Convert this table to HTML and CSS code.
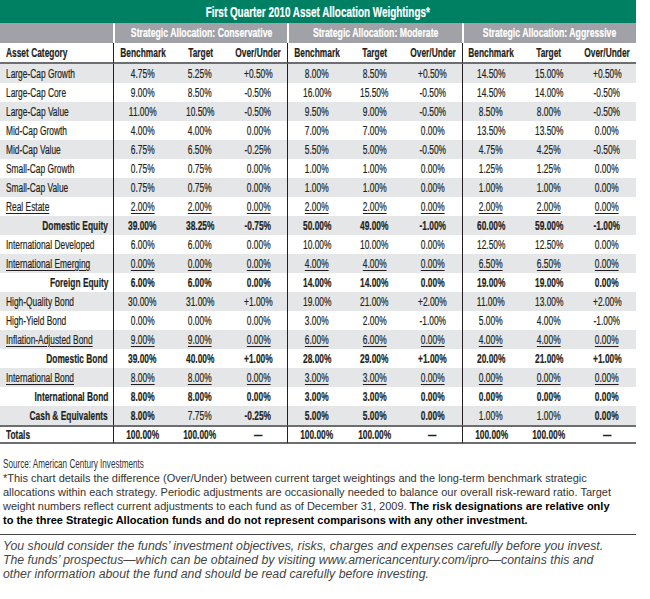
FILE: index.html
```html
<!DOCTYPE html>
<html lang="en">
<head>
    <meta charset="UTF-8">
    <title>First Quarter 2010 Asset Allocation Weightings</title>
    <link rel="stylesheet" href="styles.css">
</head>
<body>
<div class="page">
    <table class="alloc">
        <colgroup>
            <col class="c-cat">
            <col><col><col><col><col><col><col><col><col>
        </colgroup>
        <thead>
        <tr class="title"><th colspan="10"><span>First Quarter 2010 Asset Allocation Weightings*</span></th></tr>
        <tr class="groups">
            <th></th>
            <th colspan="3" class="grp"><span>Strategic Allocation: Conservative</span></th>
            <th colspan="3" class="grp"><span>Strategic Allocation: Moderate</span></th>
            <th colspan="3" class="grp"><span>Strategic Allocation: Aggressive</span></th>
        </tr>
        <tr class="heads">
            <th class="cat"><span>Asset Category</span></th>
            <th class="g"><span>Benchmark</span></th><th><span>Target</span></th><th><span>Over/Under</span></th>
            <th class="g"><span>Benchmark</span></th><th><span>Target</span></th><th><span>Over/Under</span></th>
            <th class="g"><span>Benchmark</span></th><th><span>Target</span></th><th><span>Over/Under</span></th>
        </tr>
        </thead>
        <tbody>
        <tr><td class="cat"><span>Large-Cap Growth</span></td><td class="g"><span>4.75%</span></td><td><span>5.25%</span></td><td><span>+0.50%</span></td><td class="g"><span>8.00%</span></td><td><span>8.50%</span></td><td><span>+0.50%</span></td><td class="g"><span>14.50%</span></td><td><span>15.00%</span></td><td><span>+0.50%</span></td></tr>
        <tr><td class="cat"><span>Large-Cap Core</span></td><td class="g"><span>9.00%</span></td><td><span>8.50%</span></td><td><span>-0.50%</span></td><td class="g"><span>16.00%</span></td><td><span>15.50%</span></td><td><span>-0.50%</span></td><td class="g"><span>14.50%</span></td><td><span>14.00%</span></td><td><span>-0.50%</span></td></tr>
        <tr><td class="cat"><span>Large-Cap Value</span></td><td class="g"><span>11.00%</span></td><td><span>10.50%</span></td><td><span>-0.50%</span></td><td class="g"><span>9.50%</span></td><td><span>9.00%</span></td><td><span>-0.50%</span></td><td class="g"><span>8.50%</span></td><td><span>8.00%</span></td><td><span>-0.50%</span></td></tr>
        <tr><td class="cat"><span>Mid-Cap Growth</span></td><td class="g"><span>4.00%</span></td><td><span>4.00%</span></td><td><span>0.00%</span></td><td class="g"><span>7.00%</span></td><td><span>7.00%</span></td><td><span>0.00%</span></td><td class="g"><span>13.50%</span></td><td><span>13.50%</span></td><td><span>0.00%</span></td></tr>
        <tr><td class="cat"><span>Mid-Cap Value</span></td><td class="g"><span>6.75%</span></td><td><span>6.50%</span></td><td><span>-0.25%</span></td><td class="g"><span>5.50%</span></td><td><span>5.00%</span></td><td><span>-0.50%</span></td><td class="g"><span>4.75%</span></td><td><span>4.25%</span></td><td><span>-0.50%</span></td></tr>
        <tr><td class="cat"><span>Small-Cap Growth</span></td><td class="g"><span>0.75%</span></td><td><span>0.75%</span></td><td><span>0.00%</span></td><td class="g"><span>1.00%</span></td><td><span>1.00%</span></td><td><span>0.00%</span></td><td class="g"><span>1.25%</span></td><td><span>1.25%</span></td><td><span>0.00%</span></td></tr>
        <tr><td class="cat"><span>Small-Cap Value</span></td><td class="g"><span>0.75%</span></td><td><span>0.75%</span></td><td><span>0.00%</span></td><td class="g"><span>1.00%</span></td><td><span>1.00%</span></td><td><span>0.00%</span></td><td class="g"><span>1.00%</span></td><td><span>1.00%</span></td><td><span>0.00%</span></td></tr>
        <tr class="ul"><td class="cat"><span>Real Estate</span></td><td class="g"><span>2.00%</span></td><td><span>2.00%</span></td><td><span>0.00%</span></td><td class="g"><span>2.00%</span></td><td><span>2.00%</span></td><td><span>0.00%</span></td><td class="g"><span>2.00%</span></td><td><span>2.00%</span></td><td><span>0.00%</span></td></tr>
        <tr class="sub"><td class="cat"><span>Domestic Equity</span></td><td class="g"><span>39.00%</span></td><td><span>38.25%</span></td><td><span>-0.75%</span></td><td class="g"><span>50.00%</span></td><td><span>49.00%</span></td><td><span>-1.00%</span></td><td class="g"><span>60.00%</span></td><td><span>59.00%</span></td><td><span>-1.00%</span></td></tr>
        <tr><td class="cat"><span>International Developed</span></td><td class="g"><span>6.00%</span></td><td><span>6.00%</span></td><td><span>0.00%</span></td><td class="g"><span>10.00%</span></td><td><span>10.00%</span></td><td><span>0.00%</span></td><td class="g"><span>12.50%</span></td><td><span>12.50%</span></td><td><span>0.00%</span></td></tr>
        <tr class="ul"><td class="cat"><span>International Emerging</span></td><td class="g"><span>0.00%</span></td><td><span>0.00%</span></td><td><span>0.00%</span></td><td class="g"><span>4.00%</span></td><td><span>4.00%</span></td><td><span>0.00%</span></td><td class="g"><span>6.50%</span></td><td><span>6.50%</span></td><td><span>0.00%</span></td></tr>
        <tr class="sub"><td class="cat"><span>Foreign Equity</span></td><td class="g"><span>6.00%</span></td><td><span>6.00%</span></td><td><span>0.00%</span></td><td class="g"><span>14.00%</span></td><td><span>14.00%</span></td><td><span>0.00%</span></td><td class="g"><span>19.00%</span></td><td><span>19.00%</span></td><td><span>0.00%</span></td></tr>
        <tr><td class="cat"><span>High-Quality Bond</span></td><td class="g"><span>30.00%</span></td><td><span>31.00%</span></td><td><span>+1.00%</span></td><td class="g"><span>19.00%</span></td><td><span>21.00%</span></td><td><span>+2.00%</span></td><td class="g"><span>11.00%</span></td><td><span>13.00%</span></td><td><span>+2.00%</span></td></tr>
        <tr><td class="cat"><span>High-Yield Bond</span></td><td class="g"><span>0.00%</span></td><td><span>0.00%</span></td><td><span>0.00%</span></td><td class="g"><span>3.00%</span></td><td><span>2.00%</span></td><td><span>-1.00%</span></td><td class="g"><span>5.00%</span></td><td><span>4.00%</span></td><td><span>-1.00%</span></td></tr>
        <tr class="ul"><td class="cat"><span>Inflation-Adjusted Bond</span></td><td class="g"><span>9.00%</span></td><td><span>9.00%</span></td><td><span>0.00%</span></td><td class="g"><span>6.00%</span></td><td><span>6.00%</span></td><td><span>0.00%</span></td><td class="g"><span>4.00%</span></td><td><span>4.00%</span></td><td><span>0.00%</span></td></tr>
        <tr class="sub"><td class="cat"><span>Domestic Bond</span></td><td class="g"><span>39.00%</span></td><td><span>40.00%</span></td><td><span>+1.00%</span></td><td class="g"><span>28.00%</span></td><td><span>29.00%</span></td><td><span>+1.00%</span></td><td class="g"><span>20.00%</span></td><td><span>21.00%</span></td><td><span>+1.00%</span></td></tr>
        <tr class="ul"><td class="cat"><span>International Bond</span></td><td class="g"><span>8.00%</span></td><td><span>8.00%</span></td><td><span>0.00%</span></td><td class="g"><span>3.00%</span></td><td><span>3.00%</span></td><td><span>0.00%</span></td><td class="g"><span>0.00%</span></td><td><span>0.00%</span></td><td><span>0.00%</span></td></tr>
        <tr class="sub"><td class="cat"><span>International Bond</span></td><td class="g"><span>8.00%</span></td><td><span>8.00%</span></td><td><span>0.00%</span></td><td class="g"><span>3.00%</span></td><td><span>3.00%</span></td><td><span>0.00%</span></td><td class="g"><span>0.00%</span></td><td><span>0.00%</span></td><td><span>0.00%</span></td></tr>
        <tr class="sub"><td class="cat"><span>Cash &amp; Equivalents</span></td><td class="g"><span>8.00%</span></td><td class="lt"><span>7.75%</span></td><td><span>-0.25%</span></td><td class="g"><span>5.00%</span></td><td><span>5.00%</span></td><td><span>0.00%</span></td><td class="g lt"><span>1.00%</span></td><td class="lt"><span>1.00%</span></td><td><span>0.00%</span></td></tr>
        <tr class="total"><td class="cat"><span>Totals</span></td><td class="g"><span>100.00%</span></td><td><span>100.00%</span></td><td><span>&mdash;</span></td><td class="g"><span>100.00%</span></td><td><span>100.00%</span></td><td><span>&mdash;</span></td><td class="g"><span>100.00%</span></td><td><span>100.00%</span></td><td><span>&mdash;</span></td></tr>
        </tbody>
    </table>

    <p class="source"><span>Source: American Century Investments</span></p>
    <p class="note">*This chart details the difference (Over/Under) between current target weightings and the long-term benchmark strategic<br>
        allocations within each strategy. Periodic adjustments are occasionally needed to balance our overall risk-reward ratio. Target<br>
        weight numbers reflect current adjustments to each fund as of December 31, 2009. <b>The risk designations are relative only<br>
        to the three Strategic Allocation funds and do not represent comparisons with any other investment.</b></p>
    <hr class="rule">
    <p class="disclaimer">You should consider the funds&rsquo; investment objectives, risks, charges and expenses carefully before you invest.<br>
        The funds&rsquo; prospectus&mdash;which can be obtained by visiting www.americancentury.com/ipro&mdash;contains this and<br>
        other information about the fund and should be read carefully before investing.</p>
</div>
</body>
</html>
```

FILE: styles.css
```css
body{margin:0;padding:0;background:#fff;}
.page{width:636px;}

/* condensed gothic look: Arial metrics squeezed horizontally */
.alloc{width:636px;table-layout:fixed;border-collapse:separate;border-spacing:0;font-family:"Liberation Sans",Arial,sans-serif;font-size:12.5px;color:#231f20;}
.alloc col.c-cat{width:113px;}
.alloc th,.alloc td{padding:0;text-align:center;line-height:14px;white-space:nowrap;overflow:hidden;-webkit-text-stroke:.2px currentColor;}
.alloc th span,.alloc td span{display:inline-block;margin:0 -40px;transform:scaleX(.67);transform-origin:50% 50%;}

.alloc .title{height:23px;}
.alloc .title th{background:#008062;color:#fff;font-size:15px;font-weight:bold;}
.alloc .title span{transform:scaleX(.66);}

.alloc .groups{height:20px;}
.alloc .groups th{background:#a1a2a7;color:#fff;font-size:13px;font-weight:bold;}

.alloc .groups .grp{border-left:2px solid #fff;}

.alloc .heads{height:21px;}
.alloc .heads th{font-weight:bold;border-bottom:2px solid #6d6e71;}

.alloc tbody tr{height:19px;}
.alloc tbody tr:nth-child(odd){background:#e5e6e7;}
.alloc .cat{text-align:left;padding-left:6px;}
.alloc .cat span{margin:0 -40px 0 0;transform-origin:0 50%;}
.alloc .g{border-left:1px solid #231f20;}

.alloc .ul span{text-decoration:underline;text-underline-offset:2px;}
.alloc .sub td{font-weight:bold;}
.alloc .sub .cat{text-align:right;padding:0 5px 0 0;direction:rtl;}
.alloc .sub .cat span{margin:0;direction:ltr;transform-origin:100% 50%;}
.alloc .sub .lt{font-weight:normal;}
.alloc .total td{font-weight:bold;border-top:2px solid #6d6e71;border-bottom:2px solid #6d6e71;}

.source{margin:13px 0 0;padding-left:3px;font:12.5px/14px "Liberation Sans",Arial,sans-serif;color:#333;white-space:nowrap;}
.source span{display:inline-block;transform:scaleX(.65);transform-origin:0 50%;}
.note{margin:0;padding-left:3px;font:11px/14px "Liberation Sans",Arial,sans-serif;color:#333;white-space:nowrap;}
.note b{color:#000;}
.rule{width:636px;margin:7px 0 4px;border:0;border-top:1px solid #444;}
.disclaimer{margin:0;padding-left:3px;font:italic 12.3px/14px "Liberation Sans",Arial,sans-serif;color:#444;white-space:nowrap;}
```
